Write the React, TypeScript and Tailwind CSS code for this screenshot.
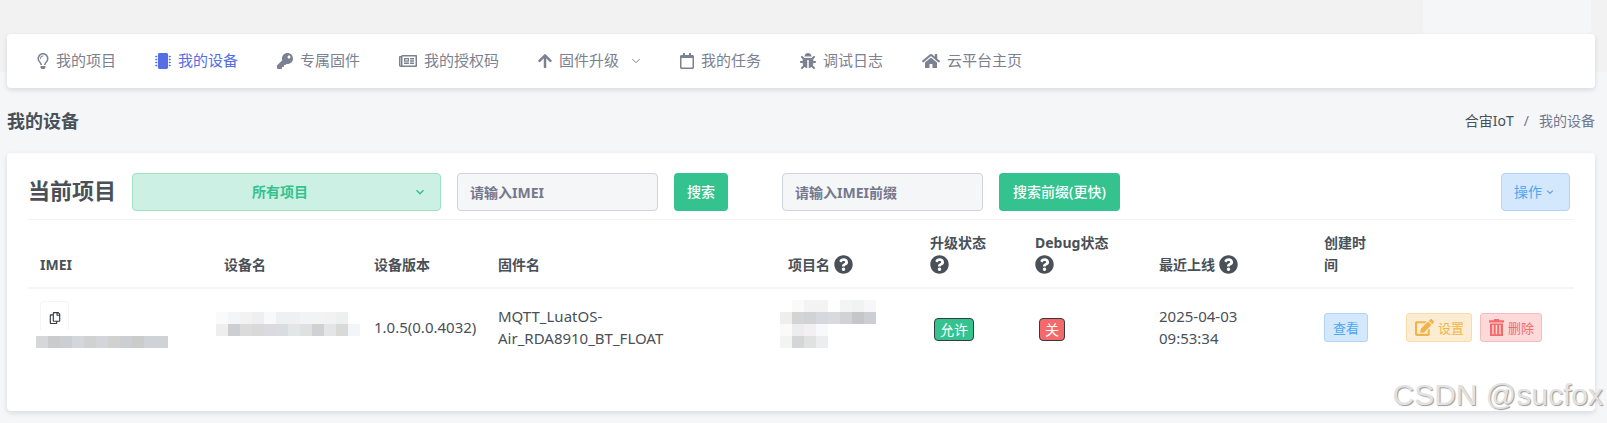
import type { ReactNode } from 'react'
import type { IconType } from 'react-icons'
import {
  FaArrowUp,
  FaBug,
  FaEdit,
  FaHome,
  FaKey,
  FaMicrochip,
  FaQuestionCircle,
  FaRegCalendar,
  FaRegCopy,
  FaRegLightbulb,
  FaRegNewspaper,
} from 'react-icons/fa'

interface NavItem {
  label: string
  icon: IconType
  iconClass: string
  active?: boolean
  dropdown?: boolean
}

const navItems: NavItem[] = [
  { label: '我的项目', icon: FaRegLightbulb, iconClass: 'w-3' },
  { label: '我的设备', icon: FaMicrochip, iconClass: 'w-4', active: true },
  { label: '专属固件', icon: FaKey, iconClass: 'w-4' },
  { label: '我的授权码', icon: FaRegNewspaper, iconClass: 'w-[18px]' },
  { label: '固件升级', icon: FaArrowUp, iconClass: 'w-[14px]', dropdown: true },
  { label: '我的任务', icon: FaRegCalendar, iconClass: 'w-[14px]' },
  { label: '调试日志', icon: FaBug, iconClass: 'w-4' },
  { label: '云平台主页', icon: FaHome, iconClass: 'w-[18px]' },
]

const columnWidths = [
  'w-[184px]',
  'w-[150px]',
  'w-[124px]',
  'w-[290px]',
  'w-[142px]',
  'w-[105px]',
  'w-[124px]',
  'w-[165px]',
  'w-[82px]',
  'w-auto',
]

// Redacted cells, one array per mosaic row
const imeiMosaic = [
  ['#d6d7da', '#cacbcc', '#cbcfd3', '#d3d6da', '#d1d1d2', '#d2d5d9', '#d1d1d2', '#cbcfd3', '#cbcbcc', '#cfd2d6', '#cfd3d6'],
]

const nameMosaic = [
  ['#fafafa', '#f3f5f7', '#f2f2f3', '#eeeff1', '#f9f9fa', '#eff0f1', '#eff0f1', '#f2f3f4', '#f2f3f3', '#f2f2f3', '#eef0f0', '#ffffff'],
  ['#eeeeee', '#cccfd2', '#dcdbdc', '#dad9da', '#dadae0', '#d9dce1', '#e3e6e7', '#dfe0e0', '#d0d1d4', '#e4e6e6', '#d9d9d8', '#f2f5f9'],
]

const projectMosaic = [
  ['#fefffe', '#fafafa', '#f3f3f4', '#f3f3f4', '#fcfffe', '#f4f4f5', '#f1f2f2', '#f7f7f7'],
  ['#efeeed', '#d3d4d4', '#d1d2d5', '#d5d8dc', '#d9dadd', '#d1d2d4', '#c5c6c8', '#cbced2'],
  ['#fafaf9', '#ebedf1', '#f2f0f0', '#f7f9fc', '#ffffff', '#ffffff', '#ffffff', '#ffffff'],
  ['#f3f3f2', '#d5d6d8', '#e0e2e1', '#ecedef', '#ffffff', '#ffffff', '#ffffff', '#ffffff'],
]

function Mosaic({ rows }: { rows: string[][] }) {
  return (
    <div aria-hidden="true">
      {rows.map((row, i) => (
        <div key={i} className="flex">
          {row.map((color, j) => (
            <span key={j} className="h-3 w-3 shrink-0" style={{ backgroundColor: color }} />
          ))}
        </div>
      ))}
    </div>
  )
}

function Chevron({ className }: { className: string }) {
  return (
    <svg viewBox="0 0 10 10" className={className} fill="none" stroke="currentColor" aria-hidden="true">
      <path d="M1.5 3.2 5 6.7l3.5-3.5" />
    </svg>
  )
}

function TrashIcon({ className }: { className: string }) {
  return (
    <svg viewBox="0 0 15 17" className={className} fill="currentColor" aria-hidden="true">
      <path d="M5 0h5v1.2h5v2.3H0V1.2h5z" />
      <path
        fillRule="evenodd"
        d="M1 4.5h13V17H1zM3.2 6v9.2h1.5V6zM6.7 6v9.2h1.5V6zM10.2 6v9.2h1.5V6z"
      />
    </svg>
  )
}

function HeadCell({ children, help }: { children?: ReactNode; help?: boolean }) {
  return (
    <th scope="col" className="px-3 pt-3 pb-[11px] text-left align-bottom font-bold">
      {children}
      {help && (
        <>
          {' '}
          <FaQuestionCircle className="inline-block size-[19px] align-[-4px]" />
        </>
      )}
    </th>
  )
}

function Navbar() {
  return (
    <nav className="flex h-[54px] items-center rounded bg-white pl-[30px] text-[15px] shadow-[0_2px_5px_rgba(18,38,63,0.13)]">
      {navItems.map(({ label, icon: Icon, iconClass, active, dropdown }) => (
        <a
          key={label}
          href="#"
          className={`mr-[39px] flex items-center whitespace-nowrap ${active ? 'text-[#556ee6]' : 'text-[#7b8190]'}`}
        >
          <Icon className={`mr-[7px] h-4 shrink-0 ${iconClass}`} />
          {label}
          {dropdown && <Chevron className="ml-3 size-2.5" />}
        </a>
      ))}
    </nav>
  )
}

function Toolbar() {
  return (
    <div className="flex items-start border-b border-[#f1f2f4] pb-2">
      <h2 className="mr-4 text-[22px] leading-[34px] font-bold whitespace-nowrap">当前项目</h2>
      <button
        type="button"
        className="mr-4 flex h-[38px] w-[309px] items-center rounded border border-[#9ee2c6] bg-[#ccf0e3] pr-[15px] pl-3 font-bold text-[#34c38f]"
      >
        <span className="flex-1 text-center">所有项目</span>
        <Chevron className="size-2.5 stroke-[1.5]" />
      </button>
      <input
        type="text"
        aria-label="IMEI"
        placeholder="请输入IMEI"
        className="mr-4 h-[38px] w-[201px] rounded border border-[#ced4da] bg-[#f4f6f8] px-3 font-bold placeholder:text-[#74788d]"
      />
      <button type="button" className="mr-[54px] h-[38px] rounded bg-[#34c38f] px-[13px] font-medium text-white">
        搜索
      </button>
      <input
        type="text"
        aria-label="IMEI前缀"
        placeholder="请输入IMEI前缀"
        className="mr-4 h-[38px] w-[201px] rounded border border-[#ced4da] bg-[#f4f6f8] px-3 font-bold placeholder:text-[#74788d]"
      />
      <button type="button" className="h-[38px] rounded bg-[#34c38f] px-3.5 font-medium text-white">
        搜索前缀(更快)
      </button>
      <button
        type="button"
        className="mr-1 ml-auto flex h-[38px] items-center gap-1 rounded border border-[#b0d5fa] bg-[#d3e8fc] pr-[15px] pl-3 text-[#50a5f1]"
      >
        操作
        <Chevron className="size-2 stroke-[1.5]" />
      </button>
    </div>
  )
}

function DeviceTable() {
  return (
    <table className="w-full table-fixed text-sm leading-[22px]">
      <colgroup>
        {columnWidths.map((width, i) => (
          <col key={i} className={width} />
        ))}
      </colgroup>
      <thead>
        <tr className="border-b-2 border-[#f4f5f8]">
          <HeadCell>IMEI</HeadCell>
          <HeadCell>设备名</HeadCell>
          <HeadCell>设备版本</HeadCell>
          <HeadCell>固件名</HeadCell>
          <HeadCell help>项目名</HeadCell>
          <HeadCell help>
            升级状态
            <br />
          </HeadCell>
          <HeadCell help>
            Debug状态
            <br />
          </HeadCell>
          <HeadCell help>最近上线</HeadCell>
          <HeadCell>
            创建时
            <br />间
          </HeadCell>
          <HeadCell />
        </tr>
      </thead>
      <tbody>
        <tr className="h-[78px]">
          <td className="pt-3 pl-2 align-top">
            <button
              type="button"
              aria-label="复制"
              className="mb-1.5 ml-1 flex h-[29px] w-[29px] items-center justify-center rounded-t border border-b-0 border-[#f4f5f8] pt-1 text-[#343a40]"
            >
              <FaRegCopy className="size-3" />
            </button>
            <Mosaic rows={imeiMosaic} />
          </td>
          <td className="pb-2 pl-1">
            <Mosaic rows={nameMosaic} />
          </td>
          <td className="px-3 pb-0.5 text-[15px]">1.0.5(0.0.4032)</td>
          <td className="px-3 pb-0.5 text-[15px]">
            MQTT_LuatOS-
            <br />
            Air_RDA8910_BT_FLOAT
          </td>
          <td className="pb-2 pl-1">
            <Mosaic rows={projectMosaic} />
          </td>
          <td className="px-4 pt-1">
            <button type="button" className="h-[23px] rounded border border-[#343a40] bg-[#34c38f] px-[5px] leading-5 text-white">
              允许
            </button>
          </td>
          <td className="px-4 pt-1">
            <button type="button" className="h-[23px] rounded border border-[#343a40] bg-[#f46a6a] px-[5px] leading-5 text-white">
              关
            </button>
          </td>
          <td className="px-3 pb-0.5 text-[15px]">
            2025-04-03
            <br />
            09:53:34
          </td>
          <td className="px-3">
            <button
              type="button"
              className="h-[29px] rounded-[3px] border border-[#b0d5fa] bg-[#d3e8fc] px-2 text-[13px] whitespace-nowrap text-[#50a5f1]"
            >
              查看
            </button>
          </td>
          <td className="px-3">
            <div className="flex gap-2">
              <button
                type="button"
                className="flex h-[29px] items-center gap-1 rounded-[3px] border border-[#f8dcab] bg-[#fcecd2] pr-[7px] pl-2 text-[13px] whitespace-nowrap text-[#f1b44c]"
              >
                <FaEdit className="size-[19px]" />
                设置
              </button>
              <button
                type="button"
                className="flex h-[29px] items-center gap-1 rounded-[3px] border border-[#fababb] bg-[#fcdada] pr-[7px] pl-2 text-[13px] whitespace-nowrap text-[#f46a6a]"
              >
                <TrashIcon className="h-[17px] w-[15px]" />
                删除
              </button>
            </div>
          </td>
        </tr>
      </tbody>
    </table>
  )
}

export default function App() {
  return (
    <div className="relative min-h-screen overflow-hidden bg-[#f4f6f8] font-['Noto_Sans','Noto_Sans_CJK_SC',sans-serif] text-sm text-[#495057]">
      <header className="bg-[linear-gradient(#f2f2f2_72px,#f4f6f8_72px)] pr-3 pl-[7px]">
        <div className="mr-1 ml-auto h-[34px] w-[168px] rounded-b bg-[#f4f6f8]" />
        <Navbar />
      </header>

      <main className="pr-3 pl-[7px]">
        <div className="flex h-[65px] items-center justify-between">
          <h1 className="text-lg font-bold">我的设备</h1>
          <nav aria-label="breadcrumb" className="flex gap-2.5 text-sm text-[#74788d]">
            <a href="#" className="text-[#495057]">
              合宙IoT
            </a>
            <span>/</span>
            <span>我的设备</span>
          </nav>
        </div>

        <section className="mb-3 min-h-[258px] rounded bg-white px-[21px] pt-5 shadow-[0_2px_5px_rgba(18,38,63,0.13)]">
          <Toolbar />
          <DeviceTable />
        </section>
      </main>

      <div className="pointer-events-none absolute right-1 bottom-1.5 font-['Liberation_Sans',sans-serif] text-[30px] leading-[44px] text-[#e2e2e2] [text-shadow:1px_1px_1px_#999]">
        CSDN @sucfox
      </div>
    </div>
  )
}
